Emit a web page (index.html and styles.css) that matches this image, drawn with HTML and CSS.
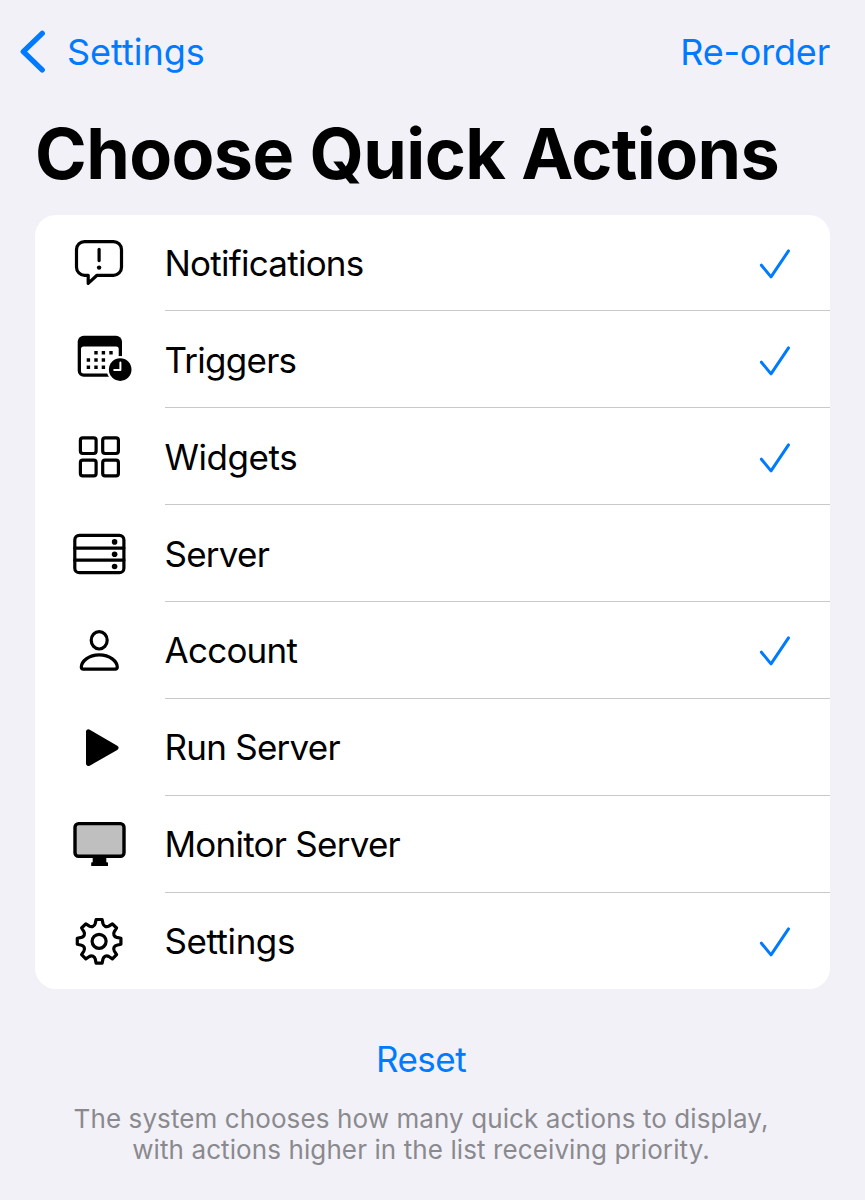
FILE: index.html
```html
<!DOCTYPE html>
<html lang="en">
<head>
	<meta charset="UTF-8">
	<title>Choose Quick Actions</title>
	<link rel="stylesheet" href="styles.css">
</head>
<body>
	<header>
		<a class="back">
			<svg class="chevron" width="30" height="46" viewBox="0 0 30 46"><path d="M24.2 4.4 5.3 22.6 24.2 40.9"/></svg>
			<span>Settings</span>
		</a>
		<a class="reorder">Re-order</a>
	</header>
	<h1>Choose Quick Actions</h1>
	<ul class="actionList">
		<li>
			<svg class="icon" viewBox="0 0 90 80">
				<path d="M24.5 18.6H53.5A8 8 0 0 1 61.5 26.6V44.3A8 8 0 0 1 53.5 52.3H37L28.2 60.4V52.3H24.5A8 8 0 0 1 16.5 44.3V26.6A8 8 0 0 1 24.5 18.6Z"/>
				<path d="M39.1 26.4V37.6"/>
				<circle class="solid" cx="39.1" cy="44.6" r="2.2"/>
			</svg>
			<div class="action"><span>Notifications</span><svg class="check" viewBox="0 0 36 36"><path d="M4.4 20.2 14 31.9 31.5 5.9"/></svg></div>
		</li>
		<li>
			<svg class="icon" viewBox="0 0 90 80">
				<rect class="solid" x="17.7" y="15.8" width="44.3" height="41" rx="6"/>
				<rect class="blank" x="21" y="26.6" width="37.7" height="26.9" rx="2.5"/>
				<path class="dots" d="M36 32.7v.1M43.4 32.7v.1M51 32.7v.1M28.4 40v.1M36 40v.1M43.4 40v.1M28.4 47.3v.1M36 47.3v.1M43.4 47.3v.1"/>
				<circle class="blank" cx="60.2" cy="49.6" r="13.5"/>
				<circle class="solid" cx="60.2" cy="49.6" r="11.3"/>
				<path class="hands" d="M60.4 42.4V50H54.2"/>
			</svg>
			<div class="action"><span>Triggers</span><svg class="check" viewBox="0 0 36 36"><path d="M4.4 20.2 14 31.9 31.5 5.9"/></svg></div>
		</li>
		<li>
			<svg class="icon" viewBox="0 0 90 80">
				<rect x="20.4" y="20.8" width="15.7" height="15.7" rx="2.4"/>
				<rect x="42.7" y="20.8" width="15.7" height="15.7" rx="2.4"/>
				<rect x="20.4" y="43.1" width="15.7" height="15.7" rx="2.4"/>
				<rect x="42.7" y="43.1" width="15.7" height="15.7" rx="2.4"/>
			</svg>
			<div class="action wide"><span>Widgets</span><svg class="check" viewBox="0 0 36 36"><path d="M4.4 20.2 14 31.9 31.5 5.9"/></svg></div>
		</li>
		<li>
			<svg class="icon" viewBox="0 0 90 80">
				<rect x="14.8" y="21.4" width="49.1" height="37.3" rx="4.5"/>
				<path d="M14.8 34.1H63.9M14.8 46.2H63.9"/>
				<circle class="solid" cx="54.6" cy="27.9" r="2.8"/>
				<circle class="solid" cx="54.6" cy="40.2" r="2.8"/>
				<circle class="solid" cx="54.6" cy="52.5" r="2.8"/>
			</svg>
			<div class="action"><span>Server</span></div>
		</li>
		<li>
			<svg class="icon" viewBox="0 0 90 80">
				<ellipse cx="39.2" cy="30.3" rx="8" ry="8.7"/>
				<path d="M23.4 59.1H55.2C56.6 59.1 57.3 58.4 57.3 57.1C57.3 51.6 50 44.8 39.3 44.8S21.3 51.6 21.3 57.1C21.3 58.4 22 59.1 23.4 59.1Z"/>
			</svg>
			<div class="action"><span>Account</span><svg class="check" viewBox="0 0 36 36"><path d="M4.4 20.2 14 31.9 31.5 5.9"/></svg></div>
		</li>
		<li>
			<svg class="icon" viewBox="0 0 90 80">
				<path class="play" d="M28.5 24.8 56 40.8 28.5 56.5Z"/>
			</svg>
			<div class="action"><span>Run Server</span></div>
		</li>
		<li>
			<svg class="icon" viewBox="0 0 90 80">
				<rect class="screen" x="15" y="19.6" width="49" height="32.7" rx="3.6"/>
				<path class="solid" d="M32.7 53H46.3V58.2H47.2Q48 58.2 48 59V61.9H31.2V59Q31.2 58.2 32 58.2H32.7Z"/>
			</svg>
			<div class="action"><span>Monitor Server</span></div>
		</li>
		<li>
			<svg class="icon" viewBox="0 0 90 80">
				<g transform="translate(39.1 40.3)">
					<path d="M-3-21.8L3-21.8L3.9-17.6Q4.4-15.7 6.1-14.9Q8-14.2 9.7-15.2L13.3-17.5L17.5-13.3L15.2-9.7Q14.2-8 14.9-6.1Q15.7-4.4 17.6-3.9L21.8-3
						L21.8 3L17.6 3.9Q15.7 4.4 14.9 6.1Q14.2 8 15.2 9.7L17.5 13.3L13.3 17.5L9.7 15.2Q8 14.2 6.1 14.9Q4.4 15.7 3.9 17.6L3 21.8
						L-3 21.8L-3.9 17.6Q-4.4 15.7-6.1 14.9Q-8 14.2-9.7 15.2L-13.3 17.5L-17.5 13.3L-15.2 9.7Q-14.2 8-14.9 6.1Q-15.7 4.4-17.6 3.9L-21.8 3
						L-21.8-3L-17.6-3.9Q-15.7-4.4-14.9-6.1Q-14.2-8-15.2-9.7L-17.5-13.3L-13.3-17.5L-9.7-15.2Q-8-14.2-6.1-14.9Q-4.4-15.7-3.9-17.6Z"/>
					<circle r="7"/>
				</g>
			</svg>
			<div class="action wide"><span>Settings</span><svg class="check" viewBox="0 0 36 36"><path d="M4.4 20.2 14 31.9 31.5 5.9"/></svg></div>
		</li>
	</ul>
	<footer>
		<a class="reset">Reset</a>
		<p>The system chooses how many quick actions to display,<br>with actions higher in the list receiving priority.</p>
	</footer>
</body>
</html>
```
FILE: styles.css
```css
* {
	margin: 0px;
	padding: 0px;
	box-sizing: border-box;
}
body{
	height: 1200px;
	padding: 0px 35px;
	background-color: #f2f1f8;
	font-family: Inter, "Liberation Sans", sans-serif;
	font-size: 35px;
	color: #000;
	overflow: hidden;
}
svg{
	display: block;
	flex: none;
	fill: none;
	stroke-linecap: round;
	stroke-linejoin: round;
}
header{
	display: flex;
	justify-content: space-between;
	align-items: center;
	height: 104px;
	margin-left: -17px;
	font-size: 36px;
	color: #007aff;
}
.back{
	display: flex;
	align-items: center;
	gap: 19px;
}
.reorder{
	letter-spacing: -0.2px;
}
.chevron{
	stroke: #007aff;
	stroke-width: 5.4;
}
h1{
	height: 110.5px;
	line-height: 100px;
	font-size: 70px;
	font-weight: 700;
	letter-spacing: -0.6px;
	white-space: nowrap;
}
.actionList{
	width: 795px;
	border-radius: 21px;
	background-color: #fff;
	list-style: none;
}
.actionList li{
	display: flex;
	align-items: center;
	height: 96.875px;
	padding-left: 25px;
}
.icon{
	width: 90px;
	height: 80px;
	margin-right: 14.5px;
	stroke: #000;
	stroke-width: 3.2;
}
.solid{
	fill: #000;
	stroke: none;
}
.blank{
	fill: #fff;
	stroke: none;
}
.dots{
	stroke-width: 3.4;
	stroke-linecap: square;
}
.hands{
	stroke: #fff;
	stroke-width: 2;
}
.play{
	fill: #000;
	stroke-width: 5;
}
.screen{
	fill: #bfbfbf;
	stroke-width: 3.4;
}
.action{
	display: flex;
	flex: 1;
	justify-content: space-between;
	align-items: center;
	height: 100%;
	padding-top: 1px;
	padding-right: 37px;
	border-bottom: 1px solid #c9c9cc;
	letter-spacing: -0.75px;
}
.wide{
	letter-spacing: -0.45px;
}
.actionList li:last-child{
	height: 96px;
}
.actionList li:last-child .action{
	border-bottom: none;
}
.check{
	width: 36px;
	height: 36px;
	stroke: #007aff;
	stroke-width: 3;
}
footer{
	width: 772px;
	padding-top: 48px;
	text-align: center;
}
.reset{
	display: block;
	line-height: 44px;
	letter-spacing: -0.5px;
	color: #007aff;
}
footer p{
	padding-top: 22px;
	font-size: 26px;
	line-height: 31px;
	letter-spacing: 0.1px;
	color: #8a8a8e;
	white-space: nowrap;
}
```
